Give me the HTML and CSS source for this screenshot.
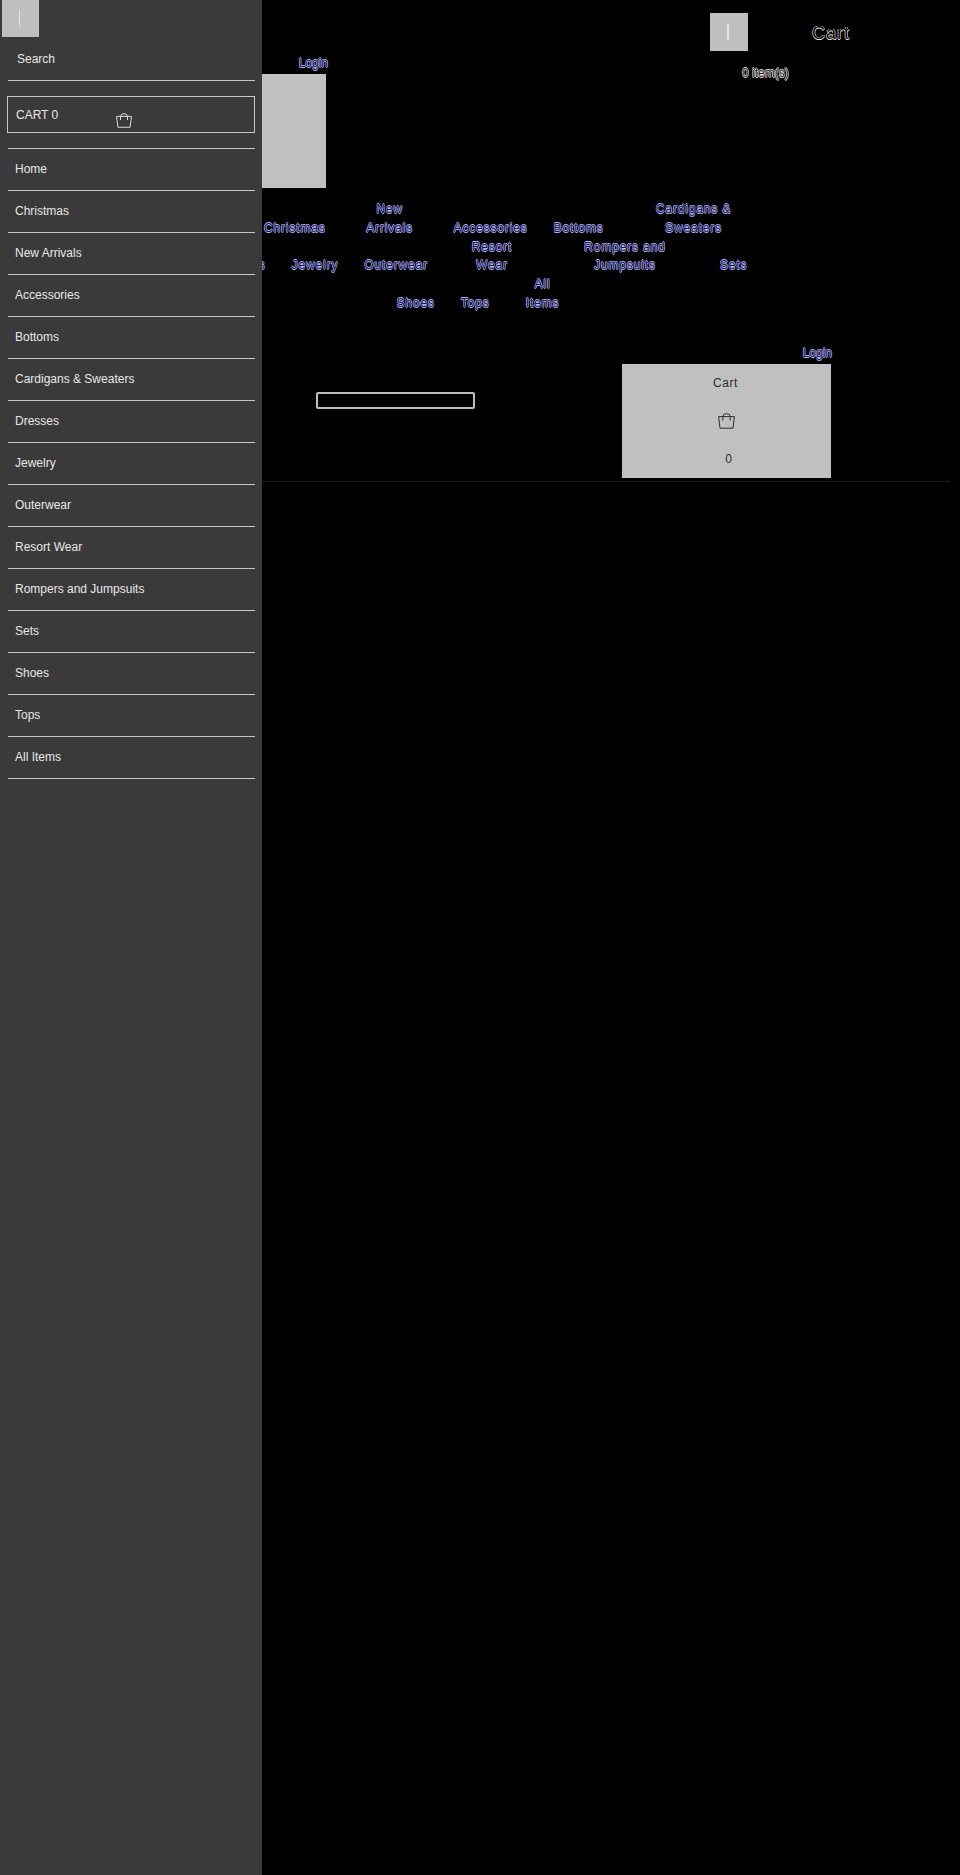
FILE: index.html
```html
<!DOCTYPE html>
<html lang="en">
<head>
<meta charset="utf-8">
<title>Shop</title>
<link rel="stylesheet" href="styles.css">
</head>
<body>
<aside class="drawer">
  <button class="menu-btn drawer-btn"><span class="bar"></span></button>
  <a class="search-link" href="#">Search</a>
  <div class="rule"></div>
  <a class="cart-box" href="#">
    <span class="cart-label">CART 0</span>
    <svg class="bag bag-drawer" viewBox="0 0 17 16" fill="none" stroke="currentColor" stroke-width="1"><path d="M.6 3.6H16.4L15 15.2H2z"/><path d="M4.8 7.5V4Q4.8.6 8.5.6T12.2 4V7.5"/></svg>
  </a>
  <ul class="drawer-list">
    <li>Home</li>
    <li>Christmas</li>
    <li>New Arrivals</li>
    <li>Accessories</li>
    <li>Bottoms</li>
    <li>Cardigans &amp; Sweaters</li>
    <li>Dresses</li>
    <li>Jewelry</li>
    <li>Outerwear</li>
    <li>Resort Wear</li>
    <li>Rompers and Jumpsuits</li>
    <li>Sets</li>
    <li>Shoes</li>
    <li>Tops</li>
    <li>All Items</li>
  </ul>
</aside>

<main class="page">
  <header class="top">
    <div class="top-left">
      <a class="link" href="#">Login</a>
      <div class="logo-box"></div>
    </div>
    <div class="top-right">
      <div class="top-actions">
        <button class="menu-btn"><span class="bar"></span></button>
        <span class="top-cart">Cart</span>
      </div>
      <span class="top-items">0 item(s)</span>
    </div>
  </header>

  <ul class="nav">
    <li>Home</li>
    <li>Christmas</li>
    <li class="w76">New<br>Arrivals</li>
    <li>Accessories</li>
    <li>Bottoms</li>
    <li class="w128">Cardigans &amp;<br>Sweaters</li>
    <li class="row-two">Dresses</li>
    <li>Jewelry</li>
    <li>Outerwear</li>
    <li class="w76">Resort<br>Wear</li>
    <li class="w138">Rompers and<br>Jumpsuits</li>
    <li>Sets</li>
    <li class="row-three">Shoes</li>
    <li>Tops</li>
    <li class="w54">All<br>Items</li>
  </ul>

  <section class="second">
    <div class="second-login"><a class="link" href="#">Login</a></div>
    <div class="second-row">
      <input class="search-input" type="text" aria-label="Search">
      <div class="cart-panel">
        <span class="panel-label">Cart</span>
        <svg class="bag bag-panel" viewBox="0 0 17 16" fill="none" stroke="currentColor" stroke-width="1"><path d="M.6 3.6H16.4L15 15.2H2z"/><path d="M4.8 7.5V4Q4.8.6 8.5.6T12.2 4V7.5"/></svg>
        <span class="panel-count">0</span>
      </div>
    </div>
  </section>
  <div class="page-rule"></div>
</main>
</body>
</html>
```
FILE: styles.css
```css
* { box-sizing: border-box; }
html, body { margin: 0; padding: 0; }
body {
  width: 960px;
  height: 1875px;
  overflow: hidden;
  background: #000;
  font-family: "Liberation Sans", Arial, sans-serif;
  font-size: 12px;
  position: relative;
}
a { text-decoration: none; color: inherit; }
ul { list-style: none; margin: 0; padding: 0; }

/* Drawer */
.drawer {
  position: absolute;
  left: 0;
  top: 0;
  width: 262px;
  height: 1875px;
  background: #3a3a3a;
  color: #e8e8e8;
  padding: 0 7px 0 8px;
  z-index: 2;
}
.menu-btn {
  display: flex;
  align-items: center;
  justify-content: center;
  width: 38px;
  height: 38px;
  padding: 0;
  border: 0;
  background: #bfbfbf;
}
.bar { display: block; width: 1.5px; height: 16px; margin-left: -2px; background: #e4e4e4; }
.drawer-btn { margin-left: -6px; width: 37px; height: 37px; }
.search-link { display: block; height: 43px; padding: 14px 0 0 9px; line-height: 16px; }
.rule { height: 1px; background: #c8c8c8; }
.cart-box {
  display: block;
  position: relative;
  height: 37px;
  margin: 15px 0 15px -1px;
  border: 1px solid #c8c8c8;
  padding: 11px 0 0 8px;
  line-height: 15px;
}
.bag { display: block; width: 17px; height: 16px; }
.bag-drawer { position: absolute; left: 108px; top: 16px; width: 16px; height: 15px; }
.drawer-list { border-top: 1px solid #c8c8c8; }
.drawer-list li {
  height: 42px;
  padding: 12px 0 0 7px;
  line-height: 16px;
  border-bottom: 1px solid #c8c8c8;
}

/* Page */
.page { width: 960px; }
.top { display: flex; height: 200px; }
.top-left {
  width: 328px;
  padding-top: 55px;
  display: flex;
  flex-direction: column;
  align-items: flex-end;
}
.link {
  display: block;
  line-height: 16px;
  color: #14143c;
  text-shadow: .6px 0 #b4b4ff, -.6px 0 #b4b4ff, 0 .6px #b4b4ff, 0 -.6px #b4b4ff;
}
.logo-box {
  width: 120px;
  height: 114px;
  margin: 3px 2px 0 0;
  background: #c0c0c0;
}
.top-right { margin-left: 382px; padding-top: 13px; }
.top-actions { display: flex; align-items: center; }
.top-cart {
  margin-left: 64px;
  margin-top: 3px;
  font-size: 18px;
  letter-spacing: 1px;
  color: #000;
  text-shadow: .5px 0 #f0f0f0, -.5px 0 #f0f0f0, 0 .5px #f0f0f0, 0 -.5px #f0f0f0;
}
.top-items {
  display: block;
  margin: 14px 0 0 32px;
  line-height: 16px;
  color: #222;
  text-shadow: .6px 0 #e0e0e0, -.6px 0 #e0e0e0, 0 .6px #e0e0e0, 0 -.6px #e0e0e0;
}

.nav {
  display: flex;
  flex-wrap: wrap;
  align-items: flex-end;
  justify-content: center;
  column-gap: 26px;
  width: 580px;
  margin: 0 auto;
  line-height: 18.8px;
  letter-spacing: 0.85px;
  text-align: center;
  color: #14143c;
  text-shadow: .6px 0 #b4b4ff, -.6px 0 #b4b4ff, 0 .6px #b4b4ff, 0 -.6px #b4b4ff;
}
.w54 { width: 54px; }
.w76 { width: 76px; }
.w128 { width: 128px; }
.w138 { width: 138px; }
.row-two { margin-left: 3px; }
.row-three { margin-left: 6px; }

.second { margin-top: 32px; }
.second-login { display: flex; justify-content: flex-end; padding-right: 128px; }
.second-row { display: flex; align-items: flex-start; height: 113px; margin-top: 3px; }
.search-input {
  width: 159px;
  height: 17px;
  margin: 28px 0 0 316px;
  padding: 0;
  border: 2px solid #bdbdbd;
  border-radius: 2px;
  background: #000;
}
.cart-panel {
  width: 209px;
  height: 114px;
  margin-left: 147px;
  background: #c0c0c0;
  color: #2c2c2c;
  display: flex;
  flex-direction: column;
  align-items: center;
}
.panel-label { margin: 11px 0 0 -2px; line-height: 16px; letter-spacing: 0.6px; }
.bag-panel { margin: 22px 0 0 0; }
.panel-count { margin: 22px 0 0 4px; line-height: 16px; }
.page-rule { height: 1px; margin: 4px 10px 0 0; background: #1c1c1c; }
```
